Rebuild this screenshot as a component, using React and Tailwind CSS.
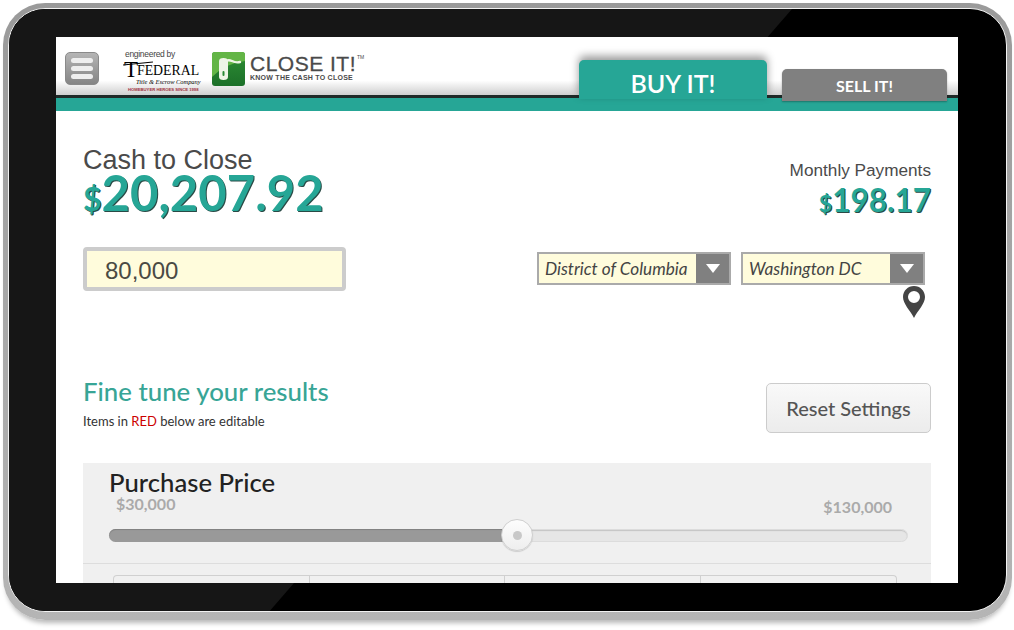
import React from "react";

const lato = "font-['Lato','Open_Sans',sans-serif]";
const arial = "font-['Liberation_Sans',Arial,sans-serif]";

function MenuButton() {
    return (
        <div className="w-[34px] h-[33px] rounded-[5px] border border-[#8a8a8a] bg-gradient-to-b from-[#b5b5b5] to-[#858585] flex flex-col justify-center gap-[3px] px-[5px]">
            <div className="h-[5px] rounded-full bg-[#eeeeee]" />
            <div className="h-[5px] rounded-full bg-[#eeeeee]" />
            <div className="h-[5px] rounded-full bg-[#eeeeee]" />
        </div>
    );
}

function FederalLogo() {
    return (
        <div className="w-[78px] flex flex-col items-start">
            <div className={`${arial} ml-[2px] text-[8.5px] leading-[9px] tracking-[-0.3px] text-[#444444] whitespace-nowrap`}>engineered by</div>
            <div className="relative mt-[3px] w-[78px] font-['Liberation_Serif',serif] text-black">
                <div className="absolute left-0 top-[1px] w-[30px] h-[1px] bg-black -rotate-6" />
                <div className="pl-[1px] flex items-end whitespace-nowrap">
                    <span className="text-[23px] leading-[16px] w-[13px]">T</span>
                    <span className="text-[13.8px] leading-[15px]">FEDERAL</span>
                </div>
                <div className="pl-[13px] text-[6.4px] leading-[8px] italic whitespace-nowrap">Title &amp; Escrow Company</div>
                <div className={`${arial} pl-[5px] mt-[1px] text-[4.2px] leading-[5px] font-bold whitespace-nowrap text-[#a03040]`}>HOMEBUYER HEROES SINCE 1998</div>
            </div>
        </div>
    );
}

function CloseItLogo() {
    return (
        <div className="flex items-start gap-[5px]">
            <div className="w-[33px] h-[34px] rounded-[3px] overflow-hidden bg-gradient-to-b from-[#2f8f35] to-[#1c7029] flex items-center justify-center">
                <svg width="33" height="34" viewBox="0 0 33 34">
                    <path d="M0 25 L0 0 L33 0 L33 9 Q14 11 0 25Z" fill="#63b546" />
                    <path d="M7 9 Q7 6 11.500 6 Q16 6 16 9 L16 25 Q16 28 11.500 28 Q7 28 7 25Z" fill="#eef5e6" />
                    <path d="M11 11 Q15 7 20 9 Q24 11 28 10" stroke="#eef5e6" strokeWidth="2.4" fill="none" strokeLinecap="round" />
                    <rect x="10.500" y="19" width="2" height="5" rx="1" fill="#2a8a35" />
                </svg>
            </div>
            <div className="flex flex-col mt-[2px]">
                <div className="flex items-start">
                    <span className={`${arial} text-[21px] leading-[19px] tracking-[0.5px] text-[#4a4a4a] [-webkit-text-stroke:0.3px_#4a4a4a] whitespace-nowrap`}>CLOSE IT!</span>
                    <span className={`${arial} ml-[1px] text-[5px] leading-[7px] text-[#4a4a4a]`}>TM</span>
                </div>
                <div className={`${arial} text-[7px] leading-[7px] mt-[1px] font-bold tracking-[0.25px] text-[#4a4a4a] whitespace-nowrap`}>KNOW THE CASH TO CLOSE</div>
            </div>
        </div>
    );
}

function Header() {
    return (
        <div className="relative">
            <div className="h-[58px] bg-gradient-to-b from-white from-[75%] to-[#cfcfcf] border-b-[3px] border-[#1f2a28] box-content flex items-start justify-between">
                <div className="flex items-start pl-[9px] pt-[15px]">
                    <MenuButton />
                    <div className="ml-[24px] -mt-[2px]"><FederalLogo /></div>
                    <div className="ml-[11px]"><CloseItLogo /></div>
                </div>
                <div className="flex items-start pr-[11px]">
                    <div className={`${lato} mt-[23px] w-[188px] h-[39px] pt-[9px] rounded-t-[5px] bg-[#26a696] shadow-[0_-4px_8px_rgba(0,0,0,0.4)] flex items-center justify-center text-white text-[25px] font-semibold`}>BUY IT!</div>
                    <div className={`${lato} mt-[32px] ml-[15px] w-[165px] h-[32px] pt-[2px] rounded-t-[5px] bg-[#808080] shadow-[0_1px_2px_rgba(0,0,0,0.3)] flex items-center justify-center text-white text-[16px] font-bold`}>SELL IT!</div>
                </div>
            </div>
            <div className="h-[13px] bg-[#26a696]" />
        </div>
    );
}

function SelectBox({ label, width }) {
    return (
        <div className={`${width} h-[33px] flex border-2 border-[#aaaaaa] bg-[#fffcdc]`}>
            <div className={`${lato} flex-1 pl-[6px] flex items-center text-[17.2px] italic text-[#444444] whitespace-nowrap`}>{label}</div>
            <div className="w-[33px] bg-[#808080] flex items-center justify-center">
                <svg width="14" height="9" viewBox="0 0 14 9"><path d="M0 0H14L7 9Z" fill="#ffffff" /></svg>
            </div>
        </div>
    );
}

function Summary() {
    return (
        <div className="flex justify-between items-start pt-[34px]">
            <div>
                <div className={`${arial} text-[27px] leading-[30px] text-[#4a4a4a]`}>Cash to Close</div>
                <div className={`${lato} flex items-baseline font-bold text-[#26a696] leading-[38px] [text-shadow:1px_1px_0_#2a4a46] -mt-[2px]`}>
                    <span className="text-[32px]">$</span>
                    <span className="text-[49px]">20,207.92</span>
                </div>
            </div>
            <div className="flex flex-col items-end pt-[15px]">
                <div className={`${arial} text-[17.2px] leading-[20px] text-[#4a4a4a]`}>Monthly Payments</div>
                <div className={`${lato} flex items-baseline font-bold text-[#26a696] leading-[34px] [text-shadow:1px_1px_0_#2a4a46] mt-[3px]`}>
                    <span className="text-[23px]">$</span>
                    <span className="text-[31.5px]">198.17</span>
                </div>
            </div>
        </div>
    );
}

function Inputs() {
    return (
        <div className="flex justify-between items-start mt-[27px]">
            <div className={`${arial} w-[263px] h-[44px] border-4 border-[#cccccc] rounded-[4px] bg-[#fffcdc] pl-[18px] pt-[3px] flex items-center text-[24px] text-[#4a4a44]`}>80,000</div>
            <div className="flex flex-col items-end pr-[6px] pt-[5px]">
                <div className="flex gap-[10px]">
                    <SelectBox label="District of Columbia" width="w-[194px]" />
                    <SelectBox label="Washington DC" width="w-[184px]" />
                </div>
                <svg className="mt-[1px]" width="22" height="32" viewBox="0 0 22 32">
                    <path fillRule="evenodd" d="M11 0C4.9 0 0 4.900 0 11c0 7 7 13 11 21 4-8 11-14 11-21C22 4.900 17.100 0 11 0Zm0 5a6 6 0 1 1 0 12 6 6 0 0 1 0-12Z" fill="#444444" />
                </svg>
            </div>
        </div>
    );
}

function FineTune() {
    return (
        <div className="flex justify-between items-start mt-[65px]">
            <div className="-mt-[7px]">
                <div className={`${lato} text-[25.8px] leading-[30px] font-medium text-[#38a596]`}>Fine tune your results</div>
                <div className={`${lato} mt-[7px] text-[13px] leading-[16px] text-[#333333]`}>Items in <span className="text-[#cc0000]">RED</span> below are editable</div>
            </div>
            <div className={`${lato} w-[165px] h-[50px] rounded-[5px] border border-[#cccccc] bg-gradient-to-b from-[#f9f9f9] to-[#ececec] flex items-center justify-center text-[20px] font-medium text-[#555555]`}>Reset Settings</div>
        </div>
    );
}

function PriceSlider() {
    return (
        <div className="mt-[30px] h-[120px] bg-[#f0f0f0]">
            <div className="h-[100px] border-b border-[#dddddd] box-content px-[26px] pr-[23px]">
                <div className={`${lato} pt-[5px] text-[25.7px] leading-[29px] font-medium text-[#222222]`}>Purchase Price</div>
                <div className={`${lato} flex justify-between items-start pl-[7px] pr-[16px] font-bold text-[16px] text-[#aaaaaa]`}>
                    <span className="leading-[20px] -mt-[3px]">$30,000</span>
                    <span className="leading-[20px]">$130,000</span>
                </div>
                <div className="relative mt-[12px] h-[13px] rounded-full bg-[#e6e6e6] border border-[#dcdcdc] shadow-[inset_0_1px_1px_#c4c4c4]">
                    <div className="h-[13px] -mt-[1px] -ml-[1px] w-[401px] rounded-l-full bg-[#999999] shadow-[inset_0_1px_1px_#808080]" />
                    <div className="absolute left-[391px] -top-[11px] w-[32px] h-[32px] rounded-full border border-[#cfcfcf] bg-gradient-to-b from-[#fdfdfd] to-[#eeeeee] shadow-[0_1px_1px_rgba(0,0,0,0.15)] flex items-center justify-center">
                        <div className="w-[9px] h-[9px] rounded-full bg-[#c8c8c8]" />
                    </div>
                </div>
            </div>
            <div className="mt-[11px] ml-[30px] w-[784px] h-[20px] grid grid-cols-4 border border-b-0 border-[#d0d0d0] rounded-t-[4px]">
                <div className="border-r border-[#d0d0d0]" />
                <div className="border-r border-[#d0d0d0]" />
                <div className="border-r border-[#d0d0d0]" />
                <div />
            </div>
        </div>
    );
}

export default function App() {
    return (
        <div className="w-[1014px] h-[630px] overflow-hidden bg-white pt-[3px] pl-[3px]">
            {/* tablet body */}
            <div className="w-[1009px] h-[617px] rounded-[42px] bg-gradient-to-b from-[#9a9a9a] to-[#b5b5b5] p-[5px] pb-[8px] shadow-[0_6px_5px_-3px_#b8b8b8]">
                <div className="relative w-[999px] h-[604px] rounded-[37px] border border-[#f2f2f2] bg-black overflow-hidden">
                    <div className="absolute inset-0 bg-[#161616] [clip-path:polygon(0_0,783px_0,259px_604px,0_604px)]" />
                    <div className="relative mt-[28px] ml-[47px] w-[902px] h-[546px] overflow-hidden bg-white">
                        <Header />
                        <div className="px-[27px]">
                            <Summary />
                            <Inputs />
                            <FineTune />
                            <PriceSlider />
                        </div>
                    </div>
                </div>
            </div>
        </div>
    );
}
